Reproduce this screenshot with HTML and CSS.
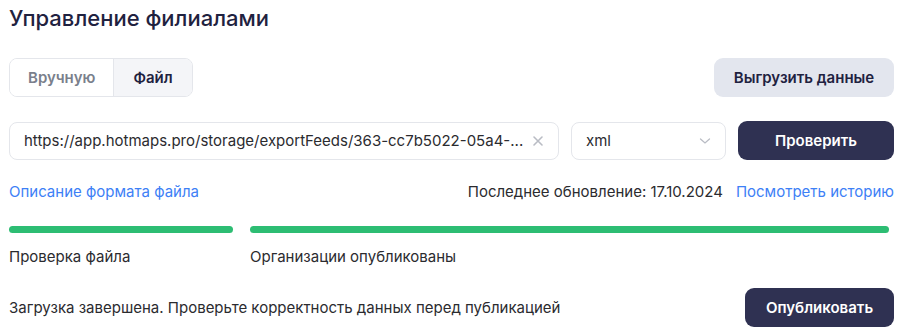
FILE: index.html
```html
<!DOCTYPE html>
<html lang="ru">
<head>
    <meta charset="UTF-8">
    <title>Управление филиалами</title>
    <link rel="stylesheet" href="styles.css">
</head>
<body>

<div class="page">
    <h2 class="title">Управление филиалами</h2>

    <div class="row top-row">
        <div class="tabs">
            <button class="tab">Вручную</button>
            <button class="tab active">Файл</button>
        </div>
        <button class="btn btn-light">Выгрузить данные</button>
    </div>

    <div class="row feed-row">
        <div class="field url-field">
            <span class="url-text">https://app.hotmaps.pro/storage/exportFeeds/363-cc7b5022-05a4-...</span>
            <svg class="clear-icon" width="12" height="12" viewBox="0 0 12 12"><path d="M2 2L10 10M10 2L2 10" stroke="#b9bcc4" stroke-width="1.6" stroke-linecap="round"/></svg>
        </div>
        <div class="field select-field">
            <span>xml</span>
            <svg width="12" height="8" viewBox="0 0 12 8"><path d="M1.5 2L6 6L10.5 2" fill="none" stroke="#b9bcc4" stroke-width="1.3" stroke-linecap="round"/></svg>
        </div>
        <button class="btn btn-dark check-btn">Проверить</button>
    </div>

    <div class="row links-row">
        <a class="link" href="#">Описание формата файла</a>
        <div class="update">
            <span>Последнее обновление: 17.10.2024</span>
            <a class="link" href="#">Посмотреть историю</a>
        </div>
    </div>

    <div class="steps">
        <div class="step step-small">
            <div class="bar"></div>
            <span>Проверка файла</span>
        </div>
        <div class="step step-big">
            <div class="bar"></div>
            <span>Организации опубликованы</span>
        </div>
    </div>

    <div class="row bottom-row">
        <span class="status">Загрузка завершена. Проверьте корректность данных перед публикацией</span>
        <button class="btn btn-dark publish-btn">Опубликовать</button>
    </div>
</div>

</body>
</html>
```

FILE: styles.css
```css
body {
    margin: 0;
    font-family: Inter, "Noto Sans", sans-serif;
    color: #2b2b2f;
    background-color: #fff;
}
.page {
    width: 885px;
    padding: 4px 0 0 9px;
}
.title {
    margin: 0;
    font-size: 22px;
    line-height: 28px;
    font-weight: 500;
    color: #1f2240;
}
.row {
    display: flex;
    align-items: center;
    justify-content: space-between;
}
.top-row {
    margin-top: 26px;
}
.tabs {
    display: flex;
    border: 1px solid #e4e6eb;
    border-radius: 8px;
    overflow: hidden;
}
.tab {
    border: none;
    background: #fff;
    font-family: inherit;
    font-size: 15px;
    font-weight: 600;
    color: #7a7f8c;
    height: 37px;
    padding: 0 18px;
}
.tab.active {
    background: #f4f5f8;
    color: #1f2240;
    border-left: 1px solid #e4e6eb;
    padding: 0 19px;
}
.btn {
    border: none;
    border-radius: 9px;
    font-family: inherit;
    font-size: 15px;
    font-weight: 600;
    height: 39px;
}
.btn-light {
    background: #e3e6ee;
    color: #1f2240;
    width: 180px;
}
.btn-dark {
    background: #2f3152;
    color: #fff;
}
.feed-row {
    margin-top: 24px;
    gap: 12px;
}
.field {
    display: flex;
    align-items: center;
    justify-content: space-between;
    height: 36px;
    border: 1px solid #e4e6eb;
    border-radius: 8px;
    padding: 0 14px;
    font-size: 15px;
    color: #2b2b2f;
}
.url-field {
    width: 520px;
}
.url-text {
    white-space: nowrap;
    overflow: hidden;
}
.select-field {
    width: 125px;
}
.check-btn {
    width: 156px;
}
.links-row {
    margin-top: 22px;
    font-size: 15px;
}
.link {
    color: #3d80f6;
    text-decoration: none;
}
.update {
    display: flex;
    gap: 13px;
}
.steps {
    display: flex;
    gap: 17px;
    margin-top: 25px;
    padding-right: 5px;
}
.step {
    display: flex;
    flex-direction: column;
    gap: 14px;
    font-size: 15px;
}
.step-small {
    width: 224px;
}
.step-big {
    flex: 1;
}
.bar {
    height: 7px;
    border-radius: 4px;
    background: #2dbd73;
}
.bottom-row {
    margin-top: 22px;
}
.status {
    font-size: 15px;
}
.publish-btn {
    width: 149px;
}
```
